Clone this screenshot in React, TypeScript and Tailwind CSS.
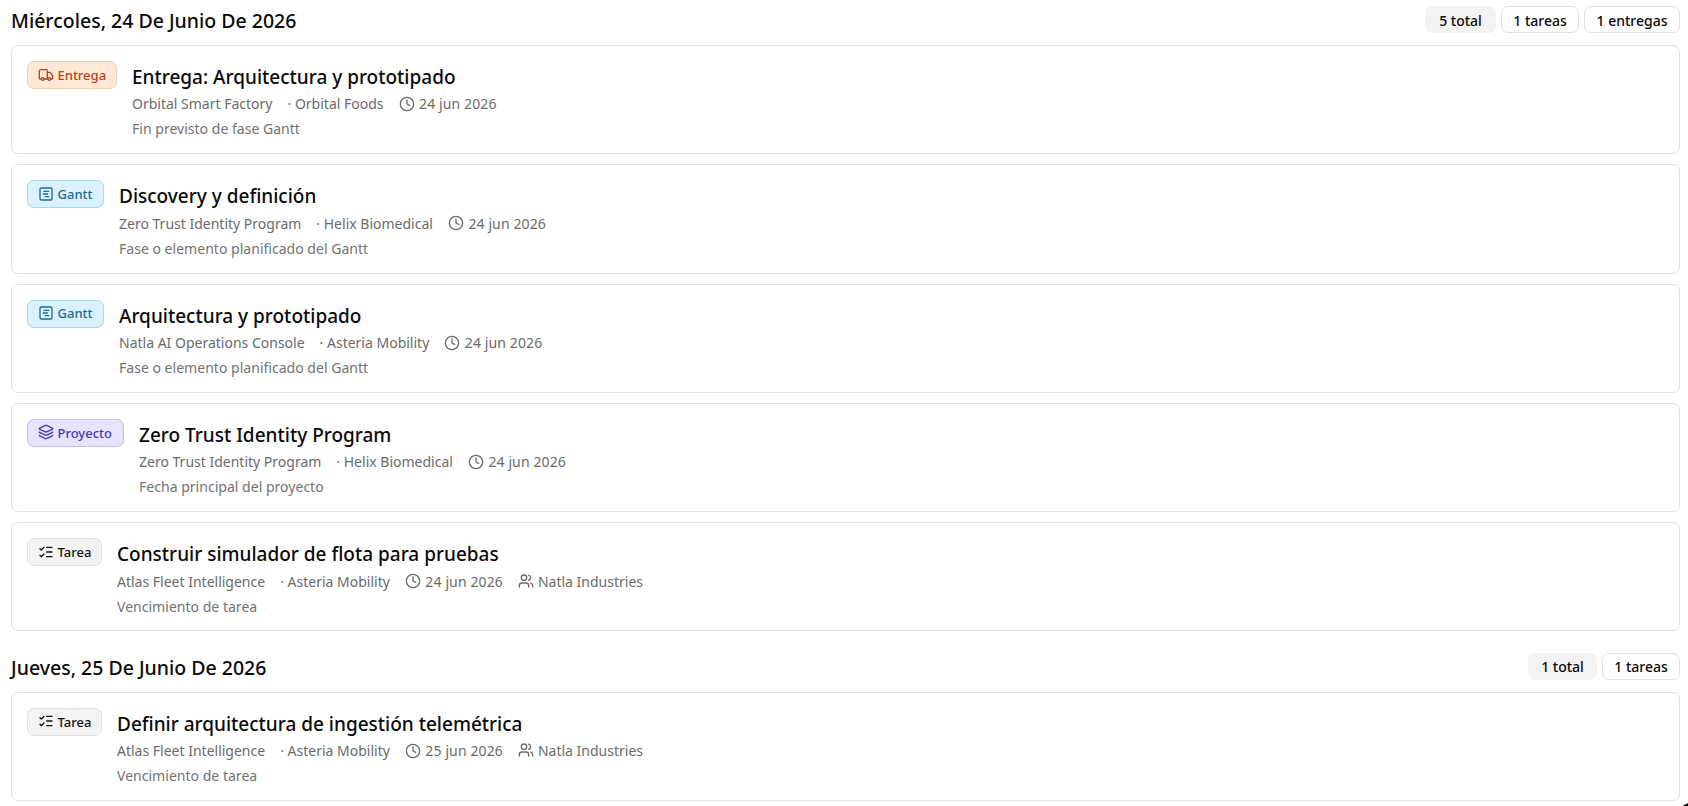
import { Clock, Layers, ListChecks, SquareChartGantt, Truck, Users } from 'lucide-react';

const kinds = {
  entrega: { label: 'Entrega', icon: Truck, width: 'w-[90px]', color: 'bg-[#ffe8d6] border-[#f3cdb0] text-[#b5441f]' },
  gantt: { label: 'Gantt', icon: SquareChartGantt, width: 'w-[77px]', color: 'bg-[#d9f2fe] border-[#a5d8ea] text-[#1f6a94]' },
  proyecto: { label: 'Proyecto', icon: Layers, width: 'w-[97px]', color: 'bg-[#e7e4fe] border-[#c3bdf0] text-[#4c36b0]' },
  tarea: { label: 'Tarea', icon: ListChecks, width: 'w-[75px]', color: 'bg-[#f3f3f3] border-[#e2e2e2] text-[#111111]' },
};

type Item = {
  kind: keyof typeof kinds;
  title: string;
  project: string;
  client: string;
  date: string;
  assignee?: string;
  note: string;
};

const days: { date: string; chips: { label: string; width: string }[]; items: Item[] }[] = [
  {
    date: 'Miércoles, 24 De Junio De 2026',
    chips: [
      { label: '5 total', width: 'w-[71px]' },
      { label: '1 tareas', width: 'w-[78px]' },
      { label: '1 entregas', width: 'w-[96px]' },
    ],
    items: [
      { kind: 'entrega', title: 'Entrega: Arquitectura y prototipado', project: 'Orbital Smart Factory', client: 'Orbital Foods', date: '24 jun 2026', note: 'Fin previsto de fase Gantt' },
      { kind: 'gantt', title: 'Discovery y definición', project: 'Zero Trust Identity Program', client: 'Helix Biomedical', date: '24 jun 2026', note: 'Fase o elemento planificado del Gantt' },
      { kind: 'gantt', title: 'Arquitectura y prototipado', project: 'Natla AI Operations Console', client: 'Asteria Mobility', date: '24 jun 2026', note: 'Fase o elemento planificado del Gantt' },
      { kind: 'proyecto', title: 'Zero Trust Identity Program', project: 'Zero Trust Identity Program', client: 'Helix Biomedical', date: '24 jun 2026', note: 'Fecha principal del proyecto' },
      { kind: 'tarea', title: 'Construir simulador de flota para pruebas', project: 'Atlas Fleet Intelligence', client: 'Asteria Mobility', date: '24 jun 2026', assignee: 'Natla Industries', note: 'Vencimiento de tarea' },
    ],
  },
  {
    date: 'Jueves, 25 De Junio De 2026',
    chips: [
      { label: '1 total', width: 'w-[69px]' },
      { label: '1 tareas', width: 'w-[78px]' },
    ],
    items: [
      { kind: 'tarea', title: 'Definir arquitectura de ingestión telemétrica', project: 'Atlas Fleet Intelligence', client: 'Asteria Mobility', date: '25 jun 2026', assignee: 'Natla Industries', note: 'Vencimiento de tarea' },
    ],
  },
];

function EventCard({ item }: { item: Item }) {
  const kind = kinds[item.kind];
  const Icon = kind.icon;

  return (
    <article className="flex h-[109.3px] items-start gap-[15px] rounded-[7px] border border-[#e2e2e2] px-[15px] pt-[15px]">
      <span className={`flex h-7 shrink-0 items-center gap-1 rounded-[7px] border pl-[9.5px] text-[13px] font-medium whitespace-nowrap ${kind.width} ${kind.color}`}>
        <Icon size={16} className="mb-px shrink-0" />
        <span className="pt-px">{kind.label}</span>
      </span>
      <div className="whitespace-nowrap">
        <h3 className="text-[19px] leading-[32.4px] font-medium text-[#0a0a0a]">{item.title}</h3>
        <div className="-mt-px flex items-center gap-[15px] text-[14px] leading-[23px] text-[#6b6b6b]">
          <span>{item.project}</span>
          <span>· {item.client}</span>
          <span className="flex items-center gap-[4.5px] tracking-[0.12px]">
            <Clock size={16} />
            {item.date}
          </span>
          {item.assignee && (
            <span className="flex items-center gap-1">
              <Users size={16} className="mb-px" />
              {item.assignee}
            </span>
          )}
        </div>
        <p className="text-[14.05px] leading-[27px] text-[#737373]">{item.note}</p>
      </div>
    </article>
  );
}

export default function App() {
  return (
    <main className="relative flex h-[806px] flex-col gap-[21.5px] overflow-hidden bg-white pt-[6px] pr-2 pl-[11px] font-['Noto_Sans',sans-serif]">
      {days.map((day) => (
        <section key={day.date}>
          <header className="mb-3 flex h-[27px] items-center justify-between">
            <h2 className="pt-[2.5px] text-[19.5px] font-medium text-[#0a0a0a]">{day.date}</h2>
            <div className="flex gap-[5px]">
              {day.chips.map((chip, i) => (
                <span
                  key={chip.label}
                  className={`flex h-[27px] items-center justify-center rounded-[7px] border pt-[2px] text-sm font-medium text-[#0a0a0a] ${chip.width} ${
                    i === 0 ? 'border-[#f3f3f3] bg-[#f3f3f3]' : 'border-[#e2e2e2] bg-white'
                  }`}
                >
                  {chip.label}
                </span>
              ))}
            </div>
          </header>
          <div className="flex flex-col gap-[10px]">
            {day.items.map((item) => (
              <EventCard key={item.title} item={item} />
            ))}
          </div>
        </section>
      ))}
      {/* Floating action button, peeking in from the corner */}
      <div className="absolute top-[801.5px] left-[1672px] size-12 rounded-full bg-black" />
    </main>
  );
}
